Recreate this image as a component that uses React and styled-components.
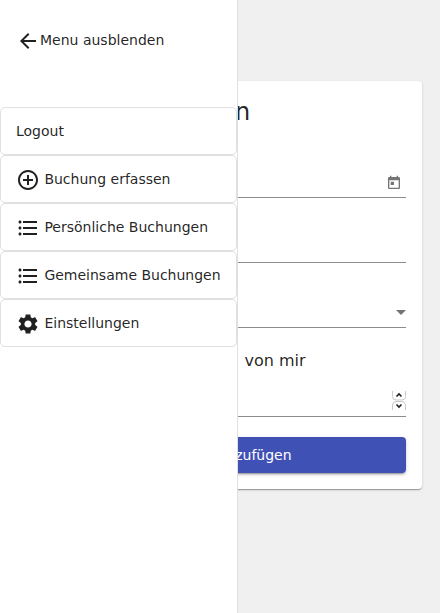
import React from 'react';
import styled, { createGlobalStyle } from 'styled-components';

const GlobalStyle = createGlobalStyle`
  *, *::before, *::after { box-sizing: border-box; }
  body {
    margin: 0;
    background: #f0f0f0;
    color: rgba(0, 0, 0, 0.87);
    font: 14px/20px "DejaVu Sans", sans-serif;
    overflow: hidden;
  }
`;

const Page = styled.div`
  position: relative;
  height: 613px;
  padding: 81px 18px 0;
  overflow: hidden;
`;

const Card = styled.main`
  display: flex;
  flex-direction: column;
  height: 408px;
  padding: 15px 16px 16px;
  background: #fff;
  border-radius: 4px;
  box-shadow: 0 2px 1px -1px rgba(0, 0, 0, 0.2), 0 1px 1px 0 rgba(0, 0, 0, 0.14),
    0 1px 3px 0 rgba(0, 0, 0, 0.12);
`;

const Title = styled.h1`
  margin: 0;
  font-size: 24px;
  font-weight: 400;
  line-height: 32px;
  white-space: nowrap;
`;

const Field = styled.div`
  display: flex;
  align-items: flex-end;
  justify-content: flex-end;
  flex: none;
  height: ${(p) => p.$height}px;
  padding: 0 ${(p) => p.$right || 0}px ${(p) => p.$bottom || 0}px 0;
  border-bottom: 1px solid #8c8c8c;

  svg { display: block; }
`;

const PayerLabel = styled.div`
  width: 271.5px;
  margin-top: 20px;
  font-size: 16px;
  line-height: 26px;
  text-align: right;
`;

const SubmitButton = styled.button`
  flex: none;
  height: 36px;
  margin-top: 20px;
  padding: 0 1px 0 0;
  border: 0;
  border-radius: 4px;
  background: #3f51b5;
  color: #fff;
  font: inherit;
  line-height: 36px;
  box-shadow: 0 3px 1px -2px rgba(0, 0, 0, 0.2), 0 2px 2px 0 rgba(0, 0, 0, 0.14),
    0 1px 5px 0 rgba(0, 0, 0, 0.12);
`;

const Drawer = styled.aside`
  position: absolute;
  inset: 0 auto 0 0;
  width: 238px;
  background: #fff;
  border-right: 1px solid #e0e0e0;
`;

const HideMenu = styled.div`
  display: flex;
  align-items: center;
  height: 107px;
  padding: 0 16px 27px;

  svg { flex: none; margin-top: 2px; }
`;

const NavItem = styled.a`
  display: flex;
  align-items: center;
  height: 48px;
  padding: 0 15px;
  border: 1px solid #e0e0e0;
  border-radius: 5px;
  white-space: nowrap;

  svg { flex: none; margin: 2px 4.4px 0 0; }
`;

const Icon = ({ d, size = 24, color = '#212121' }) => (
  <svg width={size} height={size} viewBox="0 0 24 24" fill={color}>
    <path d={d} />
  </svg>
);

const ARROW = 'M20 11H7.83l5.59-5.59L12 4l-8 8 8 8 1.41-1.41L7.83 13H20v-2z';
const ADD = 'M13 7h-2v4H7v2h4v4h2v-4h4v-2h-4V7zm-1-5C6.48 2 2 6.48 2 12s4.48 10 10 10 10-4.48 10-10S17.52 2 12 2zm0 18c-4.41 0-8-3.59-8-8s3.59-8 8-8 8 3.59 8 8-3.59 8-8 8z';
const LIST = 'M4 10.5c-.83 0-1.5.67-1.5 1.5s.67 1.5 1.5 1.5 1.5-.67 1.5-1.5-.67-1.5-1.5-1.5zm0-6c-.83 0-1.5.67-1.5 1.5S3.17 7.5 4 7.5 5.5 6.83 5.5 6 4.83 4.5 4 4.5zm0 12c-.83 0-1.5.68-1.5 1.5s.68 1.5 1.5 1.5 1.5-.68 1.5-1.5-.67-1.5-1.5-1.5zM7 19h14v-2H7v2zm0-6h14v-2H7v2zm0-8v2h14V5H7z';
const GEAR = 'M19.14 12.94c.04-.3.06-.61.06-.94 0-.32-.02-.64-.07-.94l2.03-1.58c.18-.14.23-.41.12-.61l-1.92-3.32c-.12-.22-.37-.29-.59-.22l-2.39.96c-.5-.38-1.03-.7-1.62-.94l-.36-2.54c-.04-.24-.24-.41-.48-.41h-3.84c-.24 0-.43.17-.47.41l-.36 2.54c-.59.24-1.13.57-1.62.94l-2.39-.96c-.22-.08-.47 0-.59.22L2.74 8.87c-.12.21-.08.47.12.61l2.03 1.58c-.05.3-.09.63-.09.94s.02.64.07.94l-2.03 1.58c-.18.14-.23.41-.12.61l1.92 3.32c.12.22.37.29.59.22l2.39-.96c.5.38 1.03.7 1.62.94l.36 2.54c.05.24.24.41.48.41h3.84c.24 0 .44-.17.47-.41l.36-2.54c.59-.24 1.13-.56 1.62-.94l2.39.96c.22.08.47 0 .59-.22l1.92-3.32c.12-.22.07-.47-.12-.61l-2.01-1.58zM12 15.6c-1.98 0-3.6-1.62-3.6-3.6s1.62-3.6 3.6-3.6 3.6 1.62 3.6 3.6-1.62 3.6-3.6 3.6z';
const CALENDAR = 'M19 3h-1V1h-2v2H8V1H6v2H5c-1.11 0-1.99.9-1.99 2L3 19c0 1.1.89 2 2 2h14c1.1 0 2-.9 2-2V5c0-1.1-.9-2-2-2zm0 16H5V8h14v11zM7 10h5v5H7z';

const NAV = [
  { label: 'Logout' },
  { label: 'Buchung erfassen', icon: ADD },
  { label: 'Persönliche Buchungen', icon: LIST },
  { label: 'Gemeinsame Buchungen', icon: LIST },
  { label: 'Einstellungen', icon: GEAR },
];

const Spinner = () => (
  <svg width="14" height="19" viewBox="0 0 14 19" fill="none">
    <g stroke="#cfc9c4">
      <path d="M.5 0v5.500q0 3.500 3.500 3.500h6q3.500 0 3.500-3.500V0" />
      <path d="M.5 19v-5q0-3.500 3.500-3.500h6q3.500 0 3.500 3.500v5" />
    </g>
    <g stroke="#202124" strokeWidth="1.600">
      <path d="M4.500 5.500 7 3l2.500 2.500" />
      <path d="M4.500 13.500 7 16l2.500-2.500" />
    </g>
  </svg>
);

export default function App() {
  return (
    <>
      <GlobalStyle />
      <Page>
        <Card>
          <Title>Buchung erfassen</Title>
          <Field $height={70} $right={4} $bottom={6}>
            <Icon d={CALENDAR} size={16} color="#757575" />
          </Field>
          <Field $height={65} />
          <Field $height={65} $bottom={12}>
            <svg width="10" height="5" viewBox="0 0 10 5" fill="#757575">
              <path d="M0 0h10L5 5z" />
            </svg>
          </Field>
          <PayerLabel>von mir</PayerLabel>
          <Field $height={43} $bottom={6}>
            <Spinner />
          </Field>
          <SubmitButton>Buchung hinzufügen</SubmitButton>
        </Card>
        <Drawer>
          <HideMenu>
            <Icon d={ARROW} />
            Menu ausblenden
          </HideMenu>
          <nav>
            {NAV.map(({ label, icon }) => (
              <NavItem key={label}>
                {icon && <Icon d={icon} />}
                {label}
              </NavItem>
            ))}
          </nav>
        </Drawer>
      </Page>
    </>
  );
}
